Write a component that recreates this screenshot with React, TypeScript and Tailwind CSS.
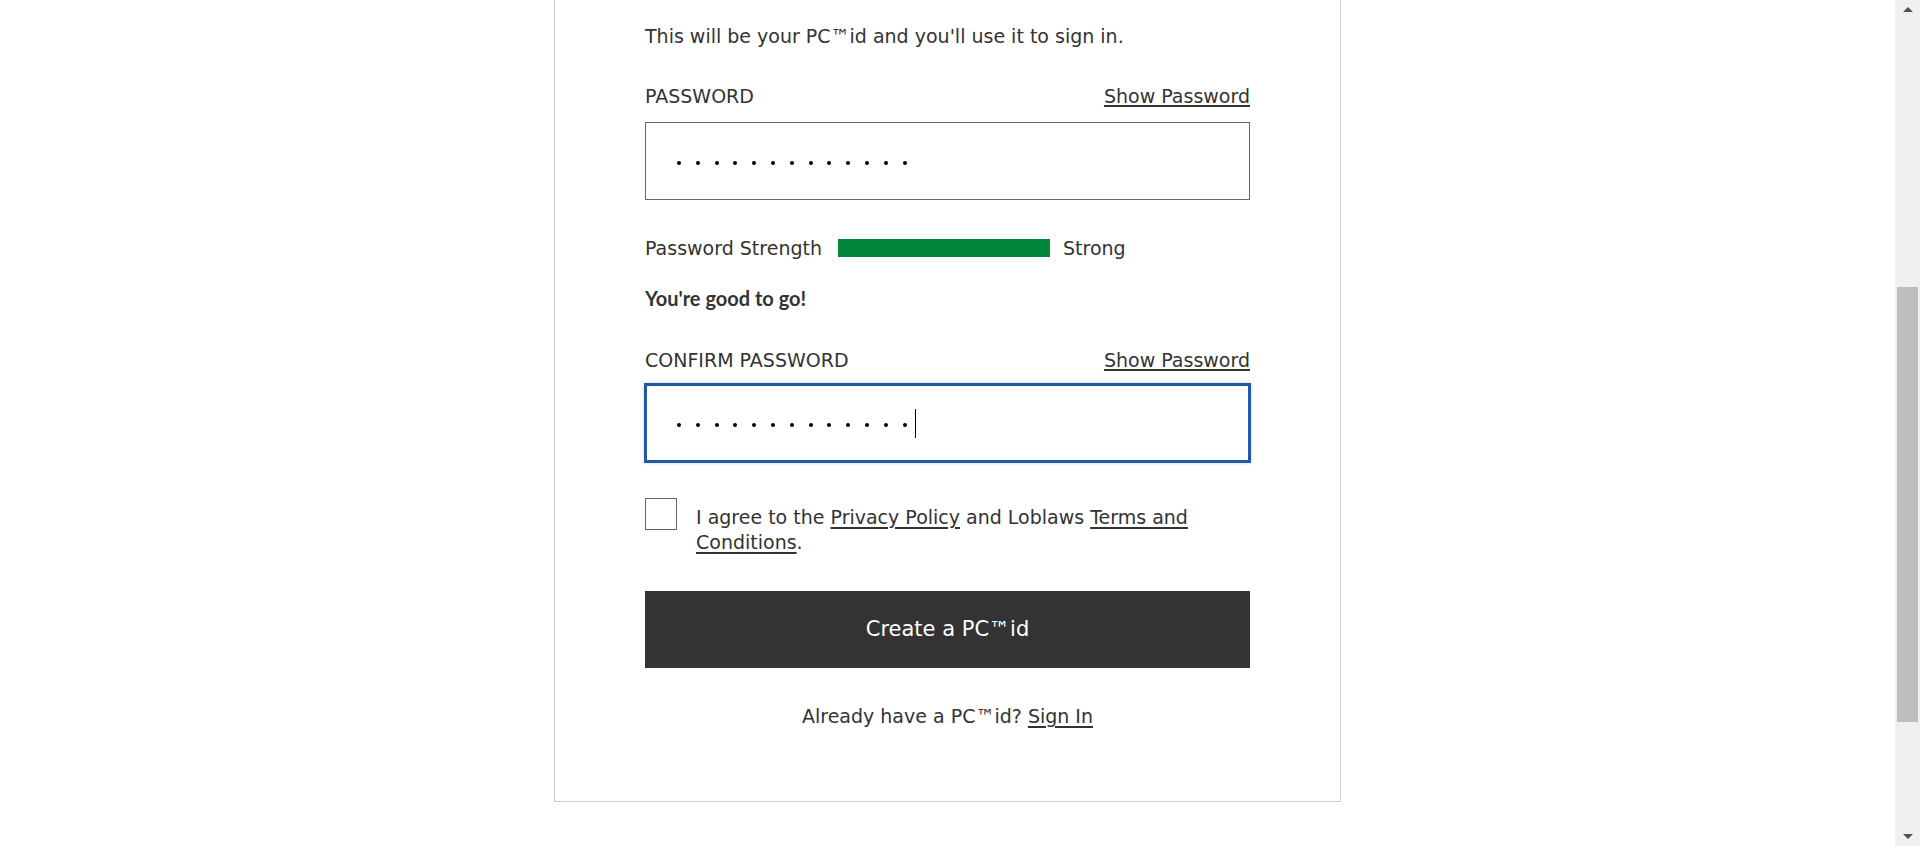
import React from 'react'

const dotCount = 13

function Dots() {
  return (
    <div className="flex items-center gap-[14.8px] mt-[3px]">
      {Array.from({ length: dotCount }).map((_, i) => (
        <span key={i} className="block w-[4px] h-[4px] rounded-full bg-black" />
      ))}
    </div>
  )
}

function FieldLabel({ label }: { label: string }) {
  return (
    <div className="flex items-center justify-between h-[24px] leading-[24px]">
      <span className="text-[19px] uppercase">{label}</span>
      <a href="#" className="text-[19px] text-[#333] underline decoration-2 underline-offset-[2px]">
        Show Password
      </a>
    </div>
  )
}

function Scrollbar() {
  return (
    <div className="flex flex-col items-center w-[25px] shrink-0 h-full bg-[#f0f0f0]">
      <svg width="10" height="6" viewBox="0 0 10 6" className="mt-[6px]">
        <path d="M0 6 L5 1 L10 6 Z" fill="#505050" />
      </svg>
      <div className="mt-[275px] w-[21px] h-[435px] bg-[#bebebe]" />
      <div className="flex-1" />
      <svg width="10" height="6" viewBox="0 0 10 6" className="mb-[6px]">
        <path d="M0 0 L5 5 L10 0 Z" fill="#505050" />
      </svg>
    </div>
  )
}

export default function App() {
  return (
    <div className="flex h-[846px] w-full overflow-hidden bg-white text-[#333] font-['DejaVu_Sans',sans-serif]">
      <main className="flex flex-1 justify-center items-start">
        <div className="w-[787px] border-x border-b border-[#cccccc] px-[90px] pt-[24px] pb-[73px]">
          <p className="text-[19px] leading-[24px]">This will be your PC™id and you'll use it to sign in.</p>

          <div className="mt-[36px]">
            <FieldLabel label="Password" />
          </div>
          <div className="mt-[14px] h-[78px] border border-[#666] flex items-center pl-[31px]">
            <Dots />
          </div>

          <div className="mt-[36px] flex items-center h-[24px] text-[19px]">
            <span className="w-[193px] shrink-0">Password Strength</span>
            <span className="block w-[212px] h-[18px] bg-[#00873e]" />
            <span className="ml-[13px]">Strong</span>
          </div>

          <p className="mt-[26px] text-[20px] leading-[24px] font-bold font-['Lato',sans-serif]">You're good to go!</p>

          <div className="mt-[38px]">
            <FieldLabel label="Confirm Password" />
          </div>
          <div className="mt-[12px] h-[78px] border-2 border-[#2159a6] shadow-[0_0_0_1px_#2159a6,0_0_4px_rgba(33,89,166,0.45)] flex items-center pl-[30px]">
            <Dots />
            <span className="block ml-[8px] w-px h-[29px] bg-black" />
          </div>

          <div className="mt-[36px] flex items-start">
            <span className="block w-[32px] h-[32px] shrink-0 border border-[#666] bg-white" />
            <p className="ml-[19px] mt-[7px] text-[19px] leading-[25px]">
              I agree to the{' '}
              <a href="#" className="underline decoration-2 underline-offset-[3px]">Privacy Policy</a> and Loblaws{' '}
              <a href="#" className="underline decoration-2 underline-offset-[3px]">Terms and</a>
              <br />
              <a href="#" className="underline decoration-2 underline-offset-[3px]">Conditions</a>.
            </p>
          </div>

          <button className="mt-[36px] h-[77px] w-full bg-[#333] text-white text-[21px] flex items-center justify-center">
            Create a PC™id
          </button>

          <p className="mt-[36px] text-center text-[19px] leading-[24px]">
            Already have a PC™id?{' '}
            <a href="#" className="underline decoration-2 underline-offset-[3px]">Sign In</a>
          </p>
        </div>
      </main>
      <Scrollbar />
    </div>
  )
}
